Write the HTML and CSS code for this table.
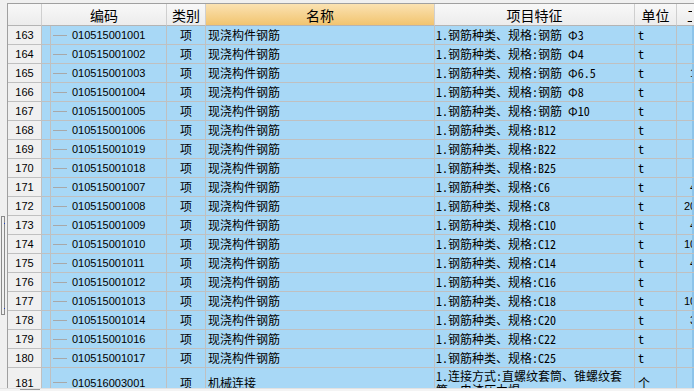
FILE: index.html
```html
<!DOCTYPE html>
<html lang="zh-CN">
<head>
<meta charset="utf-8">
<title>清单</title>
<link rel="stylesheet" href="styles.css">
</head>
<body>
<div class="app">
  <div class="side"><div class="handle"><i class="dot"></i><i class="dot low"></i></div></div>
  <div class="grid">
    <div class="row head">
      <div class="c num"></div>
      <div class="c code">编码</div>
      <div class="c type">类别</div>
      <div class="c name active">名称</div>
      <div class="c feat">项目特征</div>
      <div class="c unit">单位</div>
      <div class="c qty">工</div>
      <div class="c edge"></div>
    </div>
    <div class="row"><div class="c num">163</div><div class="c code"><span class="indent"></span><span class="link"></span><span class="cv">010515001001</span></div><div class="c type">项</div><div class="c name">现浇构件钢筋</div><div class="c feat">1.钢筋种类、规格:钢筋 Φ3</div><div class="c unit">t</div><div class="c qty"></div><div class="c edge"></div></div>
    <div class="row"><div class="c num">164</div><div class="c code"><span class="indent"></span><span class="link"></span><span class="cv">010515001002</span></div><div class="c type">项</div><div class="c name">现浇构件钢筋</div><div class="c feat">1.钢筋种类、规格:钢筋 Φ4</div><div class="c unit">t</div><div class="c qty"></div><div class="c edge"></div></div>
    <div class="row"><div class="c num">165</div><div class="c code"><span class="indent"></span><span class="link"></span><span class="cv">010515001003</span></div><div class="c type">项</div><div class="c name">现浇构件钢筋</div><div class="c feat">1.钢筋种类、规格:钢筋 Φ6.5</div><div class="c unit">t</div><div class="c qty one">1</div><div class="c edge"></div></div>
    <div class="row"><div class="c num">166</div><div class="c code"><span class="indent"></span><span class="link"></span><span class="cv">010515001004</span></div><div class="c type">项</div><div class="c name">现浇构件钢筋</div><div class="c feat">1.钢筋种类、规格:钢筋 Φ8</div><div class="c unit">t</div><div class="c qty"></div><div class="c edge"></div></div>
    <div class="row"><div class="c num">167</div><div class="c code"><span class="indent"></span><span class="link"></span><span class="cv">010515001005</span></div><div class="c type">项</div><div class="c name">现浇构件钢筋</div><div class="c feat">1.钢筋种类、规格:钢筋 Φ10</div><div class="c unit">t</div><div class="c qty"></div><div class="c edge"></div></div>
    <div class="row"><div class="c num">168</div><div class="c code"><span class="indent"></span><span class="link"></span><span class="cv">010515001006</span></div><div class="c type">项</div><div class="c name">现浇构件钢筋</div><div class="c feat">1.钢筋种类、规格:B12</div><div class="c unit">t</div><div class="c qty"></div><div class="c edge"></div></div>
    <div class="row"><div class="c num">169</div><div class="c code"><span class="indent"></span><span class="link"></span><span class="cv">010515001019</span></div><div class="c type">项</div><div class="c name">现浇构件钢筋</div><div class="c feat">1.钢筋种类、规格:B22</div><div class="c unit">t</div><div class="c qty"></div><div class="c edge"></div></div>
    <div class="row"><div class="c num">170</div><div class="c code"><span class="indent"></span><span class="link"></span><span class="cv">010515001018</span></div><div class="c type">项</div><div class="c name">现浇构件钢筋</div><div class="c feat">1.钢筋种类、规格:B25</div><div class="c unit">t</div><div class="c qty"></div><div class="c edge"></div></div>
    <div class="row"><div class="c num">171</div><div class="c code"><span class="indent"></span><span class="link"></span><span class="cv">010515001007</span></div><div class="c type">项</div><div class="c name">现浇构件钢筋</div><div class="c feat">1.钢筋种类、规格:C6</div><div class="c unit">t</div><div class="c qty one">4</div><div class="c edge"></div></div>
    <div class="row"><div class="c num">172</div><div class="c code"><span class="indent"></span><span class="link"></span><span class="cv">010515001008</span></div><div class="c type">项</div><div class="c name">现浇构件钢筋</div><div class="c feat">1.钢筋种类、规格:C8</div><div class="c unit">t</div><div class="c qty">20</div><div class="c edge"></div></div>
    <div class="row"><div class="c num">173</div><div class="c code"><span class="indent"></span><span class="link"></span><span class="cv">010515001009</span></div><div class="c type">项</div><div class="c name">现浇构件钢筋</div><div class="c feat">1.钢筋种类、规格:C10</div><div class="c unit">t</div><div class="c qty one">4</div><div class="c edge"></div></div>
    <div class="row"><div class="c num">174</div><div class="c code"><span class="indent"></span><span class="link"></span><span class="cv">010515001010</span></div><div class="c type">项</div><div class="c name">现浇构件钢筋</div><div class="c feat">1.钢筋种类、规格:C12</div><div class="c unit">t</div><div class="c qty">10</div><div class="c edge"></div></div>
    <div class="row"><div class="c num">175</div><div class="c code"><span class="indent"></span><span class="link"></span><span class="cv">010515001011</span></div><div class="c type">项</div><div class="c name">现浇构件钢筋</div><div class="c feat">1.钢筋种类、规格:C14</div><div class="c unit">t</div><div class="c qty one">4</div><div class="c edge"></div></div>
    <div class="row"><div class="c num">176</div><div class="c code"><span class="indent"></span><span class="link"></span><span class="cv">010515001012</span></div><div class="c type">项</div><div class="c name">现浇构件钢筋</div><div class="c feat">1.钢筋种类、规格:C16</div><div class="c unit">t</div><div class="c qty"></div><div class="c edge"></div></div>
    <div class="row"><div class="c num">177</div><div class="c code"><span class="indent"></span><span class="link"></span><span class="cv">010515001013</span></div><div class="c type">项</div><div class="c name">现浇构件钢筋</div><div class="c feat">1.钢筋种类、规格:C18</div><div class="c unit">t</div><div class="c qty">10</div><div class="c edge"></div></div>
    <div class="row"><div class="c num">178</div><div class="c code"><span class="indent"></span><span class="link"></span><span class="cv">010515001014</span></div><div class="c type">项</div><div class="c name">现浇构件钢筋</div><div class="c feat">1.钢筋种类、规格:C20</div><div class="c unit">t</div><div class="c qty one">3</div><div class="c edge"></div></div>
    <div class="row"><div class="c num">179</div><div class="c code"><span class="indent"></span><span class="link"></span><span class="cv">010515001016</span></div><div class="c type">项</div><div class="c name">现浇构件钢筋</div><div class="c feat">1.钢筋种类、规格:C22</div><div class="c unit">t</div><div class="c qty"></div><div class="c edge"></div></div>
    <div class="row"><div class="c num">180</div><div class="c code"><span class="indent"></span><span class="link"></span><span class="cv">010515001017</span></div><div class="c type">项</div><div class="c name">现浇构件钢筋</div><div class="c feat">1.钢筋种类、规格:C25</div><div class="c unit">t</div><div class="c qty"></div><div class="c edge"></div></div>
    <div class="row tall"><div class="c num">181</div><div class="c code"><span class="indent"></span><span class="link"></span><span class="cv">010516003001</span></div><div class="c type">项</div><div class="c name">机械连接</div><div class="c feat wrap">1.连接方式:直螺纹套筒、锥螺纹套筒、电渣压力焊</div><div class="c unit">个</div><div class="c qty"></div><div class="c edge"></div></div>
  </div>
  <div class="hscroll"><div class="thumb"></div></div>
</div>
</body>
</html>
```
FILE: styles.css
```css
html, body {
  margin: 0;
  padding: 0;
  background: #f0f0f0;
}
body {
  width: 694px;
  height: 391px;
  overflow: hidden;
  font-family: "Noto Sans CJK SC", sans-serif;
  color: #000;
}
.app {
  display: grid;
  grid-template-columns: 7px 687px;
  grid-template-rows: 385px 16px;
  padding-top: 3px;
}
.side {
  background: #f0f0f0;
}
.handle {
  margin-top: 213px;
  margin-left: 1px;
  width: 2px;
  height: 97px;
  border: 1px solid #8a8a8a;
  position: relative;
}
.dot {
  position: absolute;
  right: -1px;
  top: 6px;
  width: 1px;
  height: 1px;
  background: #2040c0;
}
.dot.low {
  top: 91px;
}
.grid {
  border-top: 1px solid #a0a0a0;
  border-left: 1px solid #a0a0a0;
  overflow: hidden;
  background: #a8d8f6;
}
.row {
  display: grid;
  grid-template-columns: 34px 125px 39px 229px 200px 42px 15px 2px;
  height: 19px;
}
.row.head {
  height: 22px;
}
.row.tall {
  height: 30px;
}
.c {
  box-sizing: border-box;
  border-right: 1px solid #c0c0c0;
  border-bottom: 1px solid #c0c0c0;
  background: #a8d8f6;
  display: flex;
  align-items: center;
  white-space: nowrap;
  overflow: hidden;
  font-size: 12px;
  line-height: 14px;
}
.c.num {
  background: #f0f0f0;
  justify-content: center;
  font-family: "Liberation Sans", sans-serif;
  font-size: 11px;
}
.c.code {
  font-family: "Liberation Sans", sans-serif;
  font-size: 11px;
}
.indent {
  box-sizing: border-box;
  align-self: stretch;
  width: 9px;
  flex: none;
  border-right: 1px solid #c0c0c0;
}
.link {
  width: 14px;
  height: 1px;
  margin-left: 2px;
  background: #a8a8a8;
  flex: none;
}
.cv {
  margin-left: 5px;
}
.c.type {
  justify-content: center;
}
.c.name {
  padding-left: 2px;
}
.c.feat, .c.unit {
  font-family: "Noto Sans Mono CJK SC", "Noto Sans CJK SC", monospace;
}
.c.feat {
  padding-left: 1px;
}
.c.feat.wrap {
  white-space: normal;
  padding-right: 8px;
  align-items: center;
  word-break: break-all;
}
.c.unit {
  padding-left: 3px;
}
.c.qty {
  border-right: none;
  padding-left: 7px;
  font-family: "Liberation Sans", sans-serif;
  font-size: 11px;
}
.c.qty.one {
  padding-left: 13px;
}
.c.edge {
  border-right: none;
  background: #8cc4ea;
}
.row.head .c {
  background: linear-gradient(#f8f8f8, #ececec);
  justify-content: center;
  padding: 0;
  font-family: "Noto Sans CJK SC", sans-serif;
  font-size: 14px;
  border-bottom-color: #b4b4b4;
  border-right-color: #cfcfcf;
}
.row.head .c.active {
  background: linear-gradient(#fbe2b2, #f1c46f);
}
.row.head .c.qty {
  justify-content: flex-start;
  padding-left: 10px;
}
.row.head .c.edge {
  border-right: none;
}
.hscroll {
  grid-column: 1 / 3;
  background: #f4f4f4;
  border-top: 1px solid #e2e2e2;
  position: relative;
}
.thumb {
  margin-left: 20px;
  width: 20px;
  height: 10px;
  border-top: 1px solid #9a9a9a;
}
```
